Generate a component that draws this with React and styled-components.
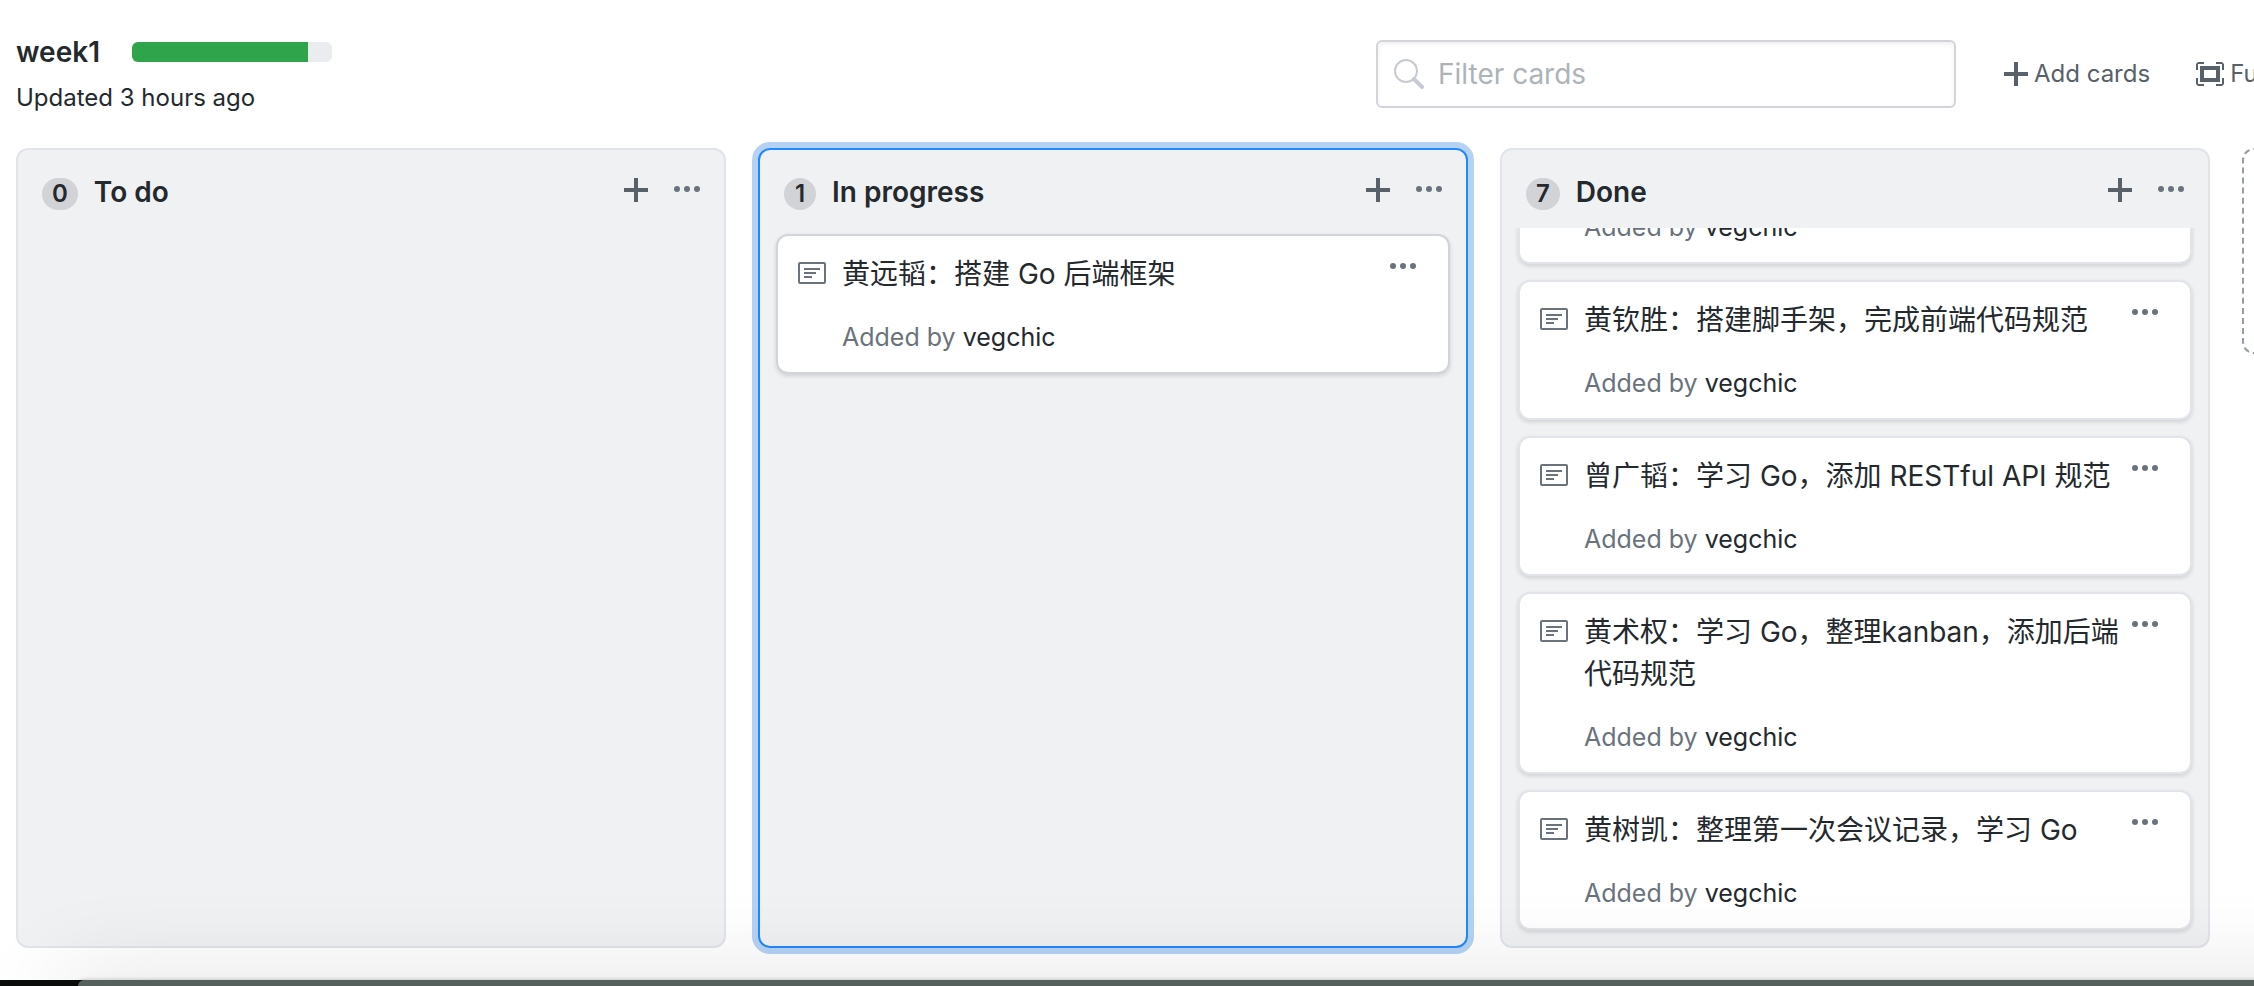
import React from 'react';
import styled, { createGlobalStyle } from 'styled-components';

const Global = createGlobalStyle`
  * { box-sizing: border-box; }
  html, body, #root { height: 100%; }
  body { margin: 0; overflow: hidden; background: #fff; color: #24292e; font-family: Inter, "Noto Sans CJK SC", sans-serif; font-size: 28px; line-height: 42px; }
  button { font: inherit; color: inherit; background: none; border: 0; padding: 0; cursor: pointer; }
  h1, h2, p, ul { margin: 0; padding: 0; }
  a { text-decoration: none; color: inherit; }
`;

const Page = styled.div`
  height: 100%;
  display: flex;
  flex-direction: column;
  overflow: hidden;
  position: relative;
`;

const Header = styled.header`
  display: flex;
  align-items: flex-start;
  padding: 32px 0 0 16px;
  height: 140px;
  flex: none;
`;

const Project = styled.div`
  flex: 1;
`;

const TitleRow = styled.div`
  display: flex;
  align-items: center;
  gap: 32px;
  height: 40px;
`;

const Title = styled.h1`
  font-size: 28px;
  line-height: 40px;
  font-weight: 600;
`;

const Progress = styled.div`
  width: 200px;
  height: 20px;
  border-radius: 6px;
  overflow: hidden;
  background: #eaecef;
`;

const Done = styled.div`
  width: 88%;
  height: 100%;
  background: #2fa44a;
`;

const Updated = styled.p`
  font-size: 24px;
  line-height: 36px;
  margin-top: 8px;
`;

const Search = styled.label`
  display: flex;
  align-items: center;
  gap: 14px;
  flex: none;
  width: 580px;
  height: 68px;
  margin-top: 8px;
  padding-left: 16px;
  border: 2px solid #d1d5da;
  border-radius: 6px;
  box-shadow: inset 0 2px 4px rgba(27, 31, 35, 0.075);
`;

const SearchInput = styled.input`
  flex: 1;
  min-width: 0;
  border: 0;
  outline: 0;
  padding: 0;
  background: none;
  font: inherit;
  color: inherit;
  &::placeholder { color: #adb3b9; opacity: 1; }
`;

const Actions = styled.div`
  display: flex;
  align-items: center;
  gap: 46px;
  flex: none;
  width: 298px;
  height: 68px;
  margin-top: 8px;
  padding-left: 48px;
  overflow: hidden;
`;

const Action = styled.button`
  display: flex;
  align-items: center;
  gap: 6px;
  flex: none;
  white-space: nowrap;
  color: #586069;
  font-size: 24px;
  line-height: 36px;
`;

const Board = styled.main`
  flex: 1;
  min-height: 0;
  display: flex;
  gap: 32px;
  padding: 8px 0 38px 16px;
  overflow: hidden;
`;

const Column = styled.section`
  flex: 0 0 710px;
  display: flex;
  flex-direction: column;
  background: #eff1f3;
  border: 2px solid ${p => (p.$focused ? '#2188ff' : '#e1e4e8')};
  border-radius: 12px;
  box-shadow: ${p => (p.$focused ? '0 0 0 6px #b5d2f5' : 'none')};
`;

const ColumnHead = styled.div`
  display: flex;
  align-items: flex-start;
  flex: none;
  height: 78px;
  padding: 28px 24px 0;
`;

const Count = styled.span`
  min-width: 32px;
  height: 32px;
  padding: 0 10px;
  border-radius: 16px;
  background: #d1d3d6;
  font-size: 24px;
  line-height: 32px;
  font-weight: 600;
  text-align: center;
`;

const ColumnTitle = styled.h2`
  flex: 1;
  margin-left: 16px;
  font-size: 28px;
  line-height: 28px;
  font-weight: 600;
`;

const IconButton = styled.button`
  display: flex;
  align-items: center;
  height: ${p => (p.$tall ? 28 : 24)}px;
  flex: none;
  color: ${p => (p.$dark ? '#586069' : '#6a737d')};
  margin-left: ${p => p.$gap || 0}px;
`;

const Cards = styled.div`
  flex: 1;
  min-height: 0;
  display: flex;
  flex-direction: column;
  justify-content: ${p => (p.$scrolled ? 'flex-end' : 'flex-start')};
  gap: 16px;
  padding: ${p => (p.$scrolled ? '0 16px 16px' : '6px 16px')};
  overflow: hidden;
`;

const Card = styled.article`
  flex: none;
  display: flex;
  align-items: flex-start;
  padding: 17px 32px 17px 20px;
  background: #fff;
  border: 2px solid ${p => (p.$focused ? '#d1d5da' : '#e1e4e8')};
  border-radius: 12px;
  box-shadow: 0 2px 4px rgba(27, 31, 35, 0.15);
`;

const NoteIcon = styled.svg`
  flex: none;
  margin: 9px 16px 0 0;
  color: #6a737d;
`;

const CardBody = styled.div`
  flex: 1;
  min-width: 0;
`;

const Added = styled.p`
  margin-top: 24px;
  font-size: 25px;
  line-height: 36px;
  color: #6a737d;
`;

const Author = styled.a`
  color: #24292e;
`;

const AddColumn = styled.button`
  flex: 0 0 710px;
  height: 206px;
  border: 2px dashed #959da5;
  border-radius: 12px;
`;

const WindowShade = styled.div`
  position: absolute;
  left: 78px;
  right: -100px;
  bottom: 0;
  height: 6px;
  background: #55605c;
  border-radius: 8px 0 0 0;
  box-shadow: 0 0 4px rgba(0, 0, 0, 0.25), 0 20px 90px 20px rgba(0, 0, 0, 0.15);
`;

const Desktop = styled.div`
  position: absolute;
  left: 0;
  bottom: 0;
  width: 100px;
  height: 6px;
  background: #0a0d0c;
`;

const Plus = () => (
  <svg width="24" height="24" viewBox="0 0 24 24" fill="currentColor" aria-hidden="true"><path d="M24 14H14v10h-4V14H0v-4h10V0h4v10h10z" /></svg>
);

const Dots = () => (
  <svg width="26" height="8" viewBox="0 0 26 8" fill="currentColor" aria-hidden="true"><circle cx="3" cy="3" r="3" /><circle cx="13" cy="3" r="3" /><circle cx="23" cy="3" r="3" /></svg>
);

const Note = () => (
  <NoteIcon width="28" height="24" viewBox="0 0 28 24" fill="none" stroke="currentColor" strokeWidth="2" aria-hidden="true"><rect x="1" y="1" width="26" height="20" rx="1" /><path d="M6 7h16M6 11h12M6 15h8" /></NoteIcon>
);

const Fullscreen = () => (
  <svg width="28" height="24" viewBox="0 0 28 24" fill="currentColor" aria-hidden="true"><path fillRule="evenodd" d="M4 4h20v16H4zM8 8v8h12V8z" /><path d="M2 0h6v2H2v6H0V2zM20 0h6l2 2v6h-2V2h-6zM0 16h2v6h6v2H2l-2-2zM26 16h2v6l-2 2h-6v-2h6z" /></svg>
);

const SearchIcon = () => (
  <svg width="30" height="30" viewBox="0 0 30 30" fill="none" stroke="#c6cbd1" aria-hidden="true"><circle cx="12" cy="12" r="11" strokeWidth="2" /><path d="M20 20l8 8" strokeWidth="4" strokeLinecap="round" /></svg>
);

const columns = [
  { name: 'To do', count: 0, cards: [] },
  { name: 'In progress', count: 1, focused: true, cards: ['黄远韬：搭建 Go 后端框架'] },
  {
    name: 'Done', count: 7, scrolled: true,
    cards: ['', '黄钦胜：搭建脚手架，完成前端代码规范', '曾广韬：学习 Go，添加 RESTful API 规范', '黄术权：学习 Go，整理kanban，添加后端代码规范', '黄树凯：整理第一次会议记录，学习 Go'],
  },
];

export default function App() {
  return (
    <Page>
      <Global />
      <Header>
        <Project>
          <TitleRow>
            <Title>week1</Title>
            <Progress><Done /></Progress>
          </TitleRow>
          <Updated>Updated 3 hours ago</Updated>
        </Project>
        <Search>
          <SearchIcon />
          <SearchInput type="text" placeholder="Filter cards" aria-label="Filter cards" />
        </Search>
        <Actions>
          <Action><Plus />Add cards</Action>
          <Action><Fullscreen />Fullscreen</Action>
        </Actions>
      </Header>
      <Board>
        {columns.map(col => (
          <Column key={col.name} $focused={col.focused}>
            <ColumnHead>
              <Count>{col.count}</Count>
              <ColumnTitle>{col.name}</ColumnTitle>
              <IconButton $dark aria-label="Add a note"><Plus /></IconButton>
              <IconButton $gap={26} aria-label="Column menu"><Dots /></IconButton>
            </ColumnHead>
            <Cards $scrolled={col.scrolled}>
              {col.cards.map((text, i) => (
                <Card key={i} $focused={col.focused}>
                  <Note />
                  <CardBody>
                    {text && <p>{text}</p>}
                    <Added>Added by <Author href="#">vegchic</Author></Added>
                  </CardBody>
                  <IconButton $tall $gap={8} aria-label="Card menu"><Dots /></IconButton>
                </Card>
              ))}
            </Cards>
          </Column>
        ))}
        <AddColumn aria-label="Add column" />
      </Board>
      <Desktop />
      <WindowShade />
    </Page>
  );
}
